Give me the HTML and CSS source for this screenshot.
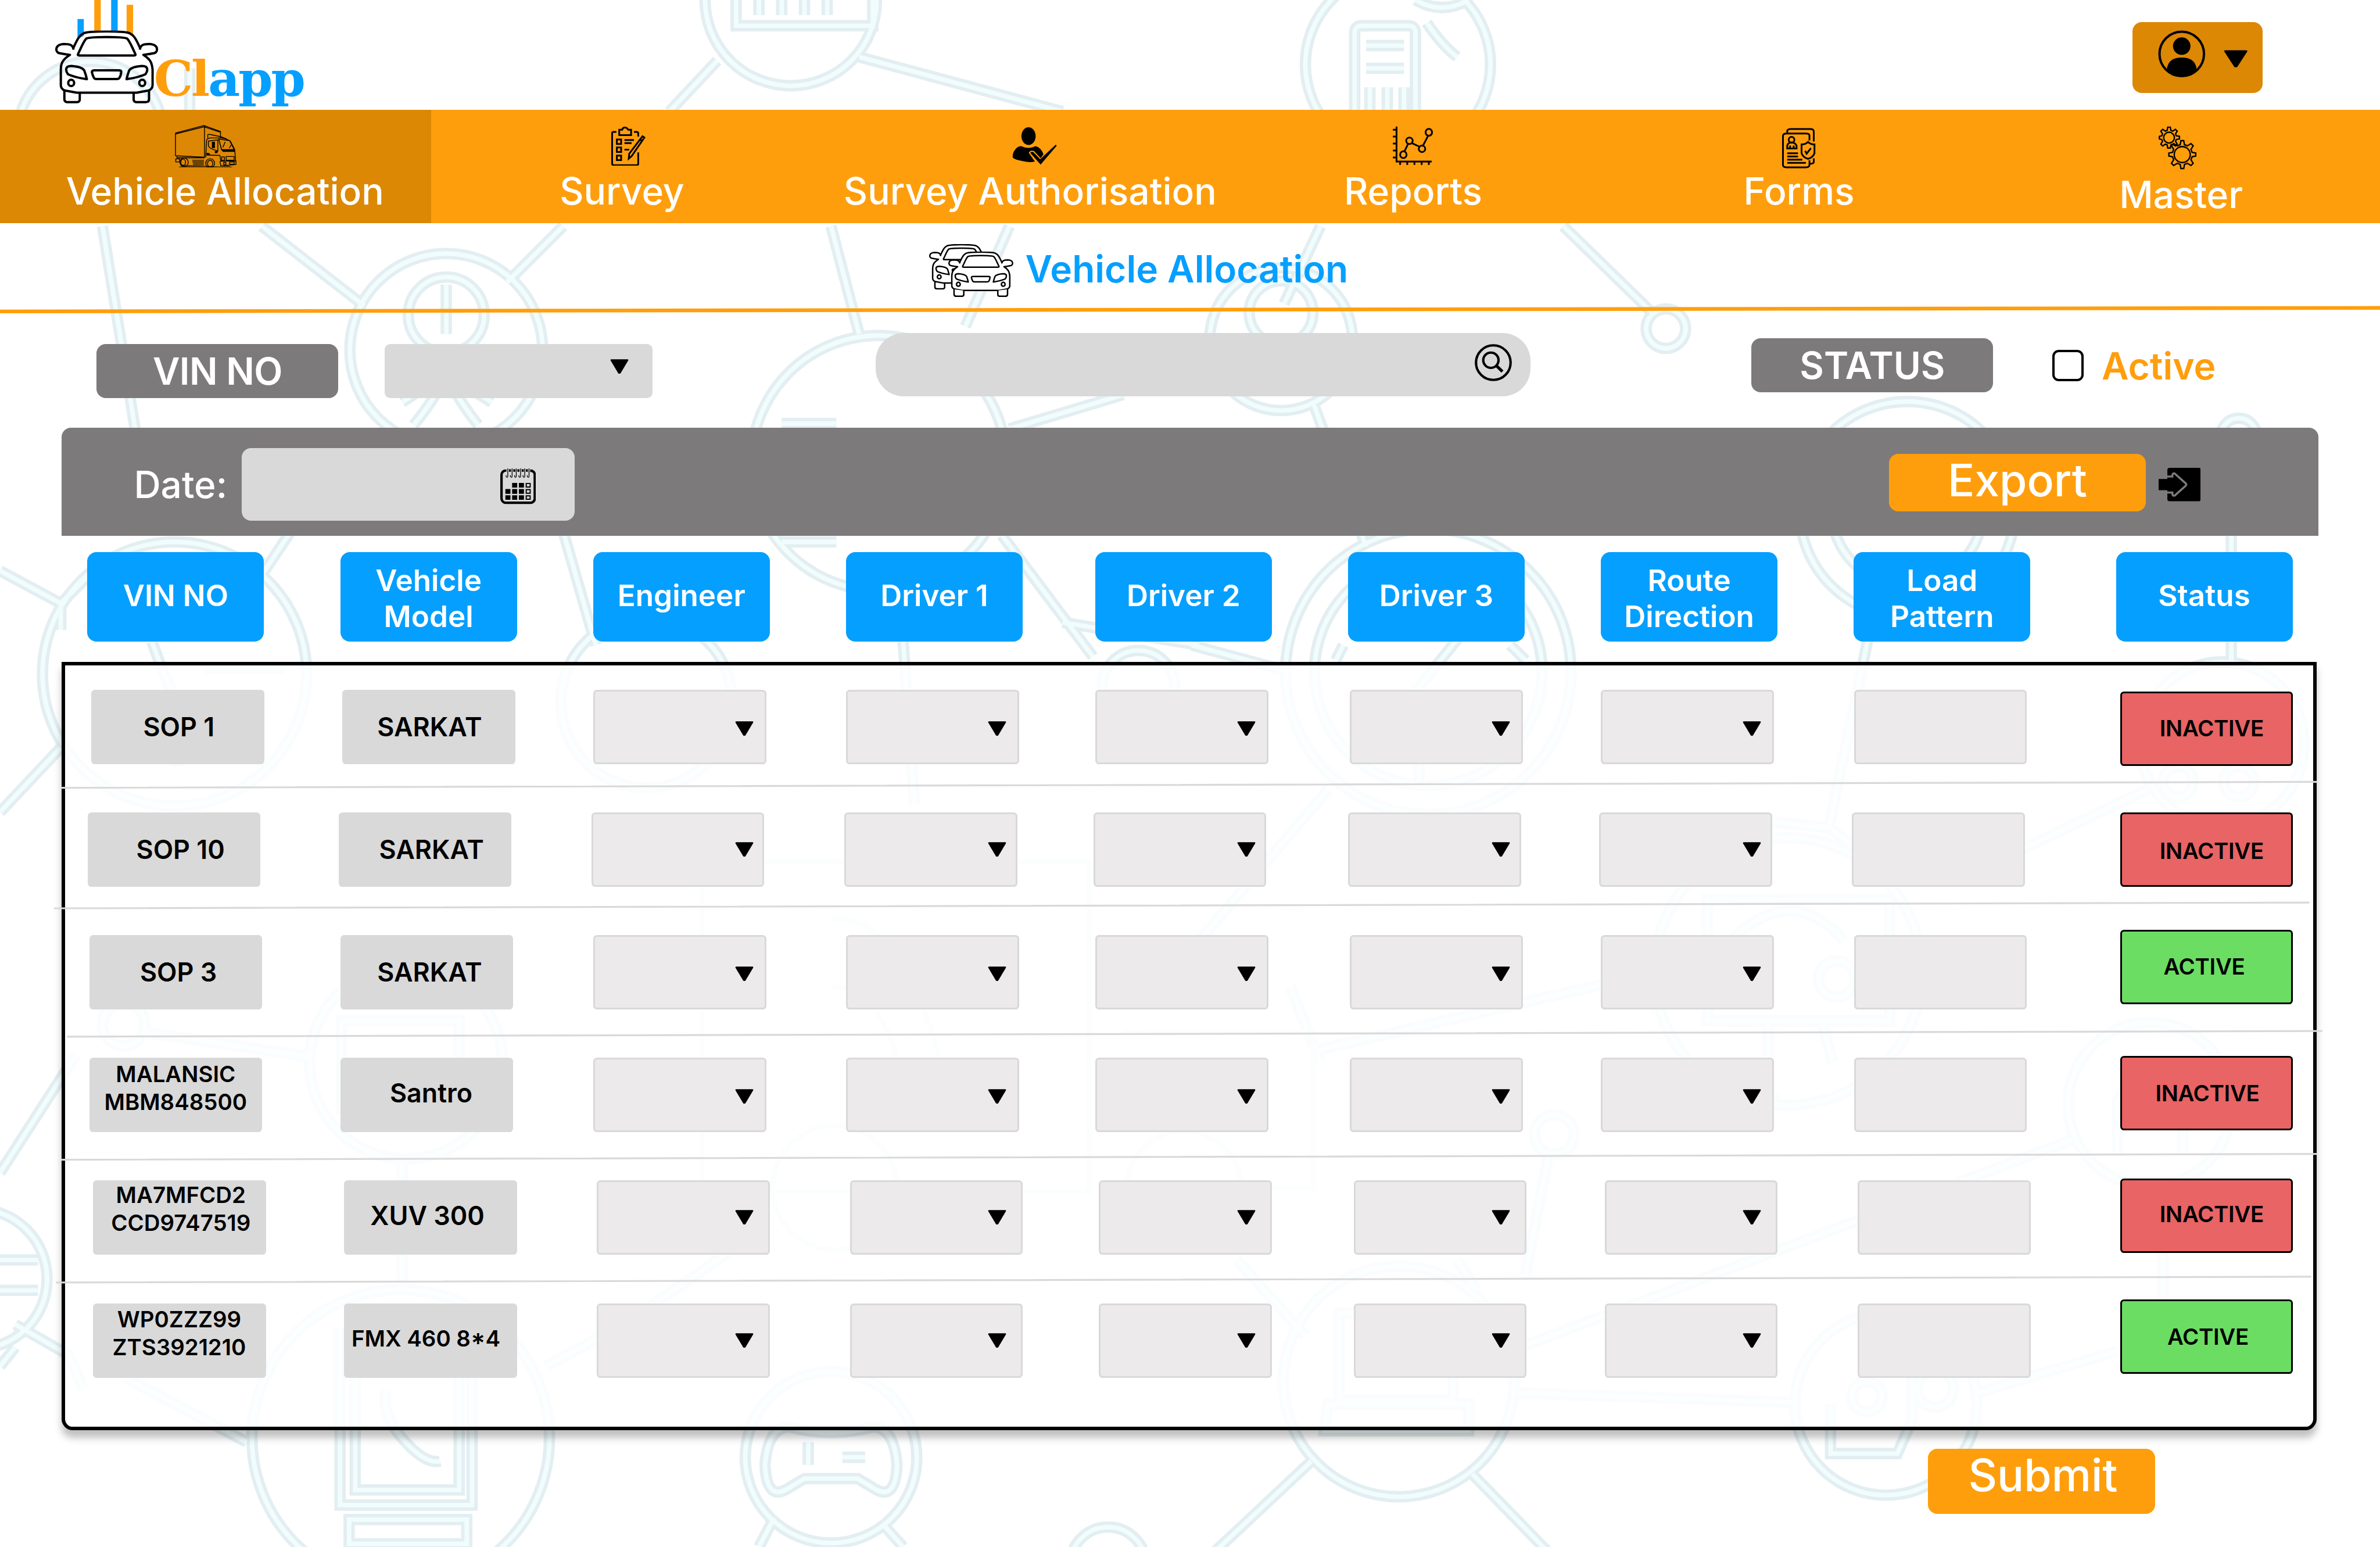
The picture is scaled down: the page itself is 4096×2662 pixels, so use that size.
FILE: index.html
```html
<!DOCTYPE html>
<html lang="en">
<head>
<meta charset="utf-8">
<title>Clapp - Vehicle Allocation</title>
<link rel="stylesheet" href="styles.css">
</head>
<body>
<svg class="defs" aria-hidden="true">
  <symbol id="caret" viewBox="0 0 10 8" preserveAspectRatio="none"><path d="M.6.5h8.8L5.3 7.4h-.6z" stroke="#000" stroke-width=".8" stroke-linejoin="round"/></symbol>
  <symbol id="car" viewBox="185 198 348 470" preserveAspectRatio="none">
    <path class="ln" d="M247 308C262 245 268 228 282 215Q300 204 359 204T436 215C450 228 456 245 471 308"/>
    <path class="ln" d="M247 322C245 288 232 285 215 285C180 287 185 345 202 345C215 350 222 352 235 355C210 385 204 410 204 450V550Q204 575 218 585L258 599H460L500 585Q514 575 514 550V450C512 410 508 385 483 355C496 352 503 350 516 345C533 345 538 287 503 285C486 285 473 288 471 322"/>
    <path class="ln" d="M262 350C275 300 280 270 290 250Q300 240 359 240T428 250C438 270 443 300 456 350Q458 359 450 359H268Q260 359 262 350Z"/>
    <path class="ln" d="M222 450Q222 427 240 427Q275 432 283 455Q288 480 292 512Q250 500 228 480Q222 465 222 450ZM496 450Q496 427 478 427Q443 432 435 455Q430 480 426 512Q468 500 490 480Q496 465 496 450ZM318 455H400Q410 455 408 467Q407 490 402 503Q400 511 392 511H325Q317 511 315 500Q311 485 309 467Q308 455 318 455Z"/>
    <ellipse class="ln" cx="239" cy="536" rx="10" ry="20"/><ellipse class="ln" cx="479" cy="536" rx="10" ry="20"/>
    <path class="ln" d="M216 588V640Q216 660 228 660H256Q268 660 268 643V601M502 588V640Q502 660 490 660H462Q450 660 450 643V601"/>
  </symbol>
  <g id="net">
    <circle cx="119" cy="177" r="96"/>
    <path d="M250 90V147"/>
    <circle cx="588" cy="461" r="127"/><circle cx="588" cy="415" r="50"/><path d="M588 375V440M520 490Q535 470 550 465M655 490Q640 470 625 465M545 560Q570 530 588 495Q606 530 630 560M530 530L560 510M648 530L616 510"/>
    <path d="M345 298L480 403M742 298L668 372M135 298L178 565M382 702L340 765M742 700L785 850"/>
    <circle cx="230" cy="888" r="174"/><path d="M0 752L80 795L120 755M80 795V830M0 1070L80 985M200 845Q220 900 235 930V1010M270 880H375"/>
    <circle cx="852" cy="925" r="113"/>
    <circle cx="1158" cy="610" r="168"/><path d="M1030 558H1102M1030 714H1102M1075 640V700"/>
    <path d="M1095 298L1132 440M1330 298L1272 430M1330 565L1480 520M1190 845L1205 1060M1320 705L1440 865"/><circle cx="1500" cy="905" r="48"/>
    <circle cx="1042" cy="0" r="113"/><path d="M970 0V34H1150V0M1000 0V20M1030 0V20M1060 0V20M1090 0V20M1132 75L1400 147M945 80L882 147"/>
    <circle cx="1842" cy="85" r="122"/><rect x="1785" y="34" width="80" height="180" rx="8"/><path d="M1800 60H1850M1800 90H1850M1805 115V145M1828 115V145M1850 115V145M1865 0Q1900 20 1935 0M1880 30Q1900 60 1920 75"/>
    <path d="M1740 298L1692 400M2060 298L2180 415"/><circle cx="2195" cy="433" r="26"/>
    <circle cx="1688" cy="447" r="94"/><circle cx="1688" cy="412" r="42"/><path d="M1730 530L1800 720"/>
    <circle cx="1882" cy="885" r="188"/><circle cx="1882" cy="885" r="150"/><path d="M1770 850L1760 870M1990 850L2010 870M1850 930L1930 830M1870 1000V1030M1700 885L1570 850M1750 1040L1580 1240M1400 820L1580 850"/>
    <circle cx="2513" cy="671" r="142"/><circle cx="2513" cy="671" r="100"/><path d="M2470 800L2410 1090L2300 1080M2410 1090L2460 1130"/>
    <circle cx="2928" cy="980" r="108"/><path d="M2940 600V872M2620 1140L2830 1040"/><circle cx="2950" cy="575" r="24"/><circle cx="2870" cy="1030" r="20"/><circle cx="2950" cy="1030" r="20"/>
    <circle cx="2356" cy="1280" r="176"/><path d="M2250 1185H2490V1345H2250ZM2330 1345V1430M2400 1345L2415 1400M2280 1240Q2360 1160 2430 1240M1730 1385L2120 1295M1700 1300L1740 1400"/><circle cx="2420" cy="1290" r="24"/>
    <circle cx="2833" cy="1455" r="108"/><circle cx="2048" cy="1495" r="26"/><path d="M2790 1520V1450Q2833 1370 2876 1450V1520M2735 1500L1990 1780M2850 1560V1740M2130 1480Q2300 1500 2340 1440M2040 1522L2010 1680"/>
    <circle cx="535" cy="1400" r="127"/><circle cx="163" cy="1350" r="28"/><path d="M192 1360L405 1392M450 1345H605V1460H450ZM530 1530V1690M100 1390L0 1545M960 1650L830 1740L720 1800"/>
    <circle cx="-30" cy="1685" r="92"/><path d="M0 1660H50M0 1700H50M20 1775L0 1800M20 1745L90 1785L110 1830M165 1815L325 1900"/>
    <circle cx="528" cy="1895" r="196"/><path d="M448 1750V1983H622V1750M468 1770V1963H605V1770M460 2002H615V2034H460ZM510 1830Q500 1860 530 1895T580 1925"/>
    <circle cx="1095" cy="1920" r="113"/><path d="M1040 1880Q1095 1895 1150 1880Q1178 1880 1182 1930Q1180 1980 1150 1960L1130 1948H1060L1040 1960Q1010 1980 1008 1930Q1012 1880 1040 1880ZM1065 1900V1930M1110 1920H1140M1165 2010L1190 2038M1020 2000L1000 2038"/><circle cx="1460" cy="2062" r="50"/>
    <circle cx="1843" cy="1820" r="152"/><path d="M1765 1730H1915V1845H1765ZM1750 1850H1935V1885H1745ZM1630 1660L1720 1760M1728 1925L1600 2045M1940 1942L2040 2045M1995 1835L2370 1848M2605 1835L2790 1780M1945 1700L1920 1660"/>
    <circle cx="2485" cy="1850" r="120"/><path d="M2412 1850V1915H2500L2520 1870V1810"/><circle cx="2460" cy="1840" r="20"/><circle cx="2550" cy="1830" r="24"/>
  </g>
</svg>

<div class="page">
  <svg class="backdrop" viewBox="0 0 3136 2038" preserveAspectRatio="none"><use href="#net" class="net-edge"/><use href="#net" class="net-core"/>
    <g class="net-van"><path d="M925 1135H1435V1570H925ZM1095 1210Q1200 1200 1260 1480M1095 1300Q1180 1300 1200 1490M1480 1360H1730V1565H1640"/><circle cx="1100" cy="1565" r="82"/><circle cx="1560" cy="1565" r="75"/></g></svg>

  <header class="header">
    <div class="logo">
      <svg class="logo-mark" viewBox="0 0 57 56"><path fill="#059fff" d="M12 10.2h3.4v9L12 21zM30.1 0h3.5v17h-3.5z"/><path fill="#ff9e0c" d="M21 0h3.5v17H21zM38.4 2.6h3.5V20l-3.5-2.6z"/><use href="#car" x="0" y="16.4" width="55.4" height="39.2"/></svg>
      <span class="logo-text"><b>Cl</b>app</span>
    </div>
    <button class="profile">
      <svg class="avatar" viewBox="0 0 26 26"><circle cx="13" cy="13" r="12.2" fill="none" stroke="#000" stroke-width="1.3"/><circle cx="13" cy="8.7" r="4.8"/><path d="M4.8 21.5Q5.5 15 13 15t8.2 6.5Q17.500 25 13 25t-8.200-3.500z"/></svg>
      <svg class="profile-caret"><use href="#caret" width="100%" height="100%"/></svg>
    </button>
  </header>

  <nav class="nav">
    <a class="tab tab-active"><span class="tab-icon"><svg class="i-truck" viewBox="588 806 211 275" preserveAspectRatio="none">
      <path class="thin" d="M592 858L688 810L744 848V888M592 858V1005L690 1014V812M592 864L688 818L742 852M694 1015L697 905Q698 893 710 890L745 890Q765 895 777 910L792 965L795 1035M701 890V870Q702 864 710 868L745 882L765 897M703 910L735 903V975L720 965Q706 955 703 940ZM738 897L775 908L790 965H748ZM738 897L748 970M760 915L752 950M780 935L774 955M697 1000L742 1003L745 1040L796 1038V1062L745 1070L742 1040M748 1012H757V1036H748ZM763 1010H790V1034H763ZM755 1048H762V1064H755ZM775 1045H790V1060H775ZM593 1025H606V1045H593ZM597 1008V1018H690"/>
      <path d="M746 964H791L792 980H752ZM715 915H725V955H715ZM697 985L708 990V1000H697ZM725 975H734V988H725Z"/>
      <path d="M648 1030H688V1068H652Z" opacity=".5"/>
      <path d="M602 1080Q612 1062 650 1066L690 1070L745 1074L770 1068L786 1080Z" opacity=".6"/>
      <g class="thin"><ellipse cx="621" cy="1047" rx="14" ry="28"/><ellipse cx="618" cy="1047" rx="8" ry="20"/><ellipse cx="709" cy="1054" rx="15" ry="30"/><ellipse cx="709" cy="1056" rx="9" ry="22"/></g></svg></span>Vehicle Allocation</a>
    <a class="tab"><span class="tab-icon"><svg class="i-survey" viewBox="210 126 74 254" preserveAspectRatio="none">
      <path class="mid" d="M222 160H216Q213 160 213 168V364Q213 374 217 374H264Q268 374 268 366V292M259 160H264Q268 160 268 168V190M228 146H234Q236 131 240 131T247 146H253V180H228ZM223 208H232V237H223ZM223 260H232V289H223ZM223 312H232V341H223ZM239 212H259M239 232H254M239 274H249M272 208L277 188L281 196L276 218ZM272 208L249 300L248 332L254 316L276 218"/></svg></span>Survey</a>
    <a class="tab"><span class="tab-icon"><svg class="i-user" viewBox="1056 131 95 242" preserveAspectRatio="none">
      <ellipse cx="1090.500" cy="188" rx="15" ry="57"/><path d="M1075 253Q1090 275 1105 253Q1116 258 1122 305L1116 330L1102 284Q1094 275 1091 296L1104 352Q1092 360 1080 350Q1060 340 1057 325Q1056 290 1066 262Q1070 253 1075 253Z"/><path d="M1094 296Q1097 285 1101 292L1115 337L1148 243L1150 250L1116 372Z"/></svg></span>Survey Authorisation</a>
    <a class="tab"><span class="tab-icon"><svg class="i-reports" viewBox="190 626 58 195" preserveAspectRatio="none">
      <path class="mid" d="M196 628V802H245M191 644H196M191 678H196M191 713H196M191 747H196M191 782H196M201 802V819M211 802V819M221 802V819M231 802V819M241 802V819M207 752L212 715M217 710L229 730M233 722L240 674"/><g class="mid"><ellipse cx="205.500" cy="768" rx="4.500" ry="17"/><ellipse cx="214" cy="699" rx="4.500" ry="16"/><ellipse cx="231.500" cy="739" rx="4.500" ry="16"/><ellipse cx="241" cy="657" rx="4.500" ry="17"/></g></svg></span>Reports</a>
    <a class="tab"><span class="tab-icon"><svg class="i-forms" viewBox="734 634 48 202" preserveAspectRatio="none">
      <path class="mid" d="M742 660V648Q743 640 747 640H774Q779 640 779 652V702M779 785V805Q778 812 774 812M773 697V672Q773 662 768 662H741Q736 662 736 674V818Q736 830 741 830H768Q773 830 773 818V795M742 736V722Q743 707 748 707T755 722V736ZM746 722V734M751 722V734M742 760H757M742 776H757M742 792H763M742 808H768M762 716Q768 716 771 704Q774 716 780 716V760Q778 780 771 788Q764 780 762 760ZM767 748L769 762L775 735"/><ellipse class="mid" cx="748" cy="693" rx="4" ry="14"/></svg></span>Forms</a>
    <a class="tab tab-low"><span class="tab-icon"><svg class="i-master" viewBox="0 0 20.400 23.200">
      <g class="mid fine"><circle cx="5.600" cy="6.200" r="2.900"/><path d="M4.900.6h1.400l.3 1.700 1 .4L9 1.700l1 1-.9 1.500.4 1 1.700.3v1.400l-1.700.3-.4 1 .9 1.500-1 1-1.400-1-1 .4-.3 1.700H4.900l-.3-1.700-1-.4-1.400 1-1-1 .9-1.500-.4-1-1.300-.3V5.500l1.300-.3.4-1-.9-1.500 1-1 1.400 1 1-.4z"/>
      <circle cx="12.700" cy="15.300" r="4.300"/><path d="M12 7.800h1.500l.4 2.200 1.600.6 1.900-1.200 1.200 1.200-1.200 1.900.6 1.600 2 .4v1.600l-2 .4-.6 1.600 1.200 1.900-1.200 1.200-1.900-1.200-1.600.6-.4 2.200H12l-.4-2.200-1.600-.6-1.900 1.200-1.200-1.200 1.200-1.900-.6-1.600-2-.4v-1.600l2-.4.6-1.600-1.200-1.900 1.200-1.200 1.900 1.200 1.600-.6z"/></g></svg></span>Master</a>
  </nav>

  <div class="title-bar">
    <svg class="cars" viewBox="0 0 46 29"><use href="#car" x="0" y="0" width="35" height="24.500"/><use href="#car" class="car-front" x="10.300" y="4" width="35" height="24.500"/></svg>
    <h1>Vehicle Allocation</h1>
  </div>
  <svg class="rule" viewBox="0 0 1280 5" preserveAspectRatio="none"><path d="M0 3.400L1280 1.500" stroke="#ff9e0c" stroke-width="2"/></svg>

  <section class="filters">
    <span class="pill pill-vin">VIN NO</span>
    <div class="vin-select"><svg class="caret"><use href="#caret" width="100%" height="100%"/></svg></div>
    <div class="search"><svg viewBox="0 0 20 20"><g fill="none" stroke="#000" stroke-width="1.300"><circle cx="10" cy="10" r="9.300"/><circle cx="8.700" cy="8.700" r="4.100" stroke-width="1.300"/><path d="M11.700 11.700l3.200 3.100" stroke-width="1.600"/></g></svg></div>
    <span class="pill pill-status">STATUS</span>
    <span class="checkbox"></span><span class="check-label">Active</span>
  </section>

  <section class="toolbar">
    <span class="date-label">Date:</span>
    <div class="date-input"><svg viewBox="0 0 19 19"><rect x=".65" y="1.100" width="17.700" height="17.200" rx="2.300" fill="none" stroke="#000" stroke-width="1.300"/><path d="M2.600 0h13.800v2.200H2.600z" fill="#d9d9d9"/><path d="M4.600.5h1.100v1.300H4.600zM6.900.5H8v1.300H6.900zM9.100.5h1.100v1.300H9.100zM11.400.5h1.100v1.300h-1.100zM13.600.5h1.100v1.300h-1.100zM1.600 1L3.300.5v1.300H1.800zM15.900.5l1.600.5v.9h-1.600z"/><path d="M4 0v4.300q-.3.900-.9 0V3.600M6.300 0v4.300q-.3.900-.9 0V3.600M8.500 0v4.300q-.3.900-.9 0V3.600M10.800 0v4.300q-.3.900-.9 0V3.600M13 0v4.300q-.3.900-.9 0V3.600M15.300 0v4.300q-.3.900-.9 0V3.600" fill="none" stroke="#000" stroke-width=".4"/><path d="M6.300 7.700h2.700v2.500H6.300zM9.900 7.700h2.700v2.500H9.900zM2.700 11h2.700v2.500H2.700zM6.300 11h2.700v2.500H6.300zM9.900 11h2.700v2.500H9.900zM2.700 14.300h2.700v2.400H2.700zM6.300 14.300h2.700v2.400H6.300zM9.900 14.300h2.700v2.400H9.900z"/><path d="M13.800 8h2.100v1.900h-2.100zM13.800 11.300h2.100v1.900h-2.100zM13.800 14.600h2.100v1.800h-2.100z" fill="none" stroke="#000" stroke-width=".6"/></svg></div>
    <button class="btn btn-export">Export</button>
    <svg class="export-icon" viewBox="0 0 22.500 18"><path d="M6 0h15.800q.7 0 .7.700v16.600q0 .7-.7.700H6q-1.300 0-1.300-1.200V12H0V6h4.700V1.200Q4.700 0 6 0z"/><path d="M4.600 4.700h2.800V3.900q.2-1.200 1.300-.8L14.600 8.400q.6.600 0 1.200L8.700 14.900q-1.100.4-1.300-.8v-.8H4.600" fill="none" stroke="#7d7a7b" stroke-width="1.100"/></svg>
  </section>

  <div class="heads">
    <div class="head">VIN NO</div><div class="head head-two">Vehicle<br>Model</div><div class="head">Engineer</div><div class="head">Driver 1</div><div class="head">Driver 2</div><div class="head">Driver 3</div><div class="head head-two">Route<br>Direction</div><div class="head head-two">Load<br>Pattern</div><div class="head">Status</div>
  </div>

  <main class="table">
    <div class="row row-1">
      <div class="ids"><div class="cell vin"><span>SOP 1</span></div><div class="cell model"><span>SARKAT</span></div></div>
      <div class="fields"><div class="field"><svg class="caret"><use href="#caret" width="100%" height="100%"/></svg></div><div class="field"><svg class="caret"><use href="#caret" width="100%" height="100%"/></svg></div><div class="field"><svg class="caret"><use href="#caret" width="100%" height="100%"/></svg></div><div class="field"><svg class="caret"><use href="#caret" width="100%" height="100%"/></svg></div><div class="field"><svg class="caret"><use href="#caret" width="100%" height="100%"/></svg></div><div class="field"></div></div>
      <div class="status inactive"><span>INACTIVE</span></div>
    </div>
    <div class="row row-2">
      <div class="ids"><div class="cell vin"><span>SOP 10</span></div><div class="cell model"><span>SARKAT</span></div></div>
      <div class="fields"><div class="field"><svg class="caret"><use href="#caret" width="100%" height="100%"/></svg></div><div class="field"><svg class="caret"><use href="#caret" width="100%" height="100%"/></svg></div><div class="field"><svg class="caret"><use href="#caret" width="100%" height="100%"/></svg></div><div class="field"><svg class="caret"><use href="#caret" width="100%" height="100%"/></svg></div><div class="field"><svg class="caret"><use href="#caret" width="100%" height="100%"/></svg></div><div class="field"></div></div>
      <div class="status inactive"><span>INACTIVE</span></div>
    </div>
    <div class="row row-3">
      <div class="ids"><div class="cell vin"><span>SOP 3</span></div><div class="cell model"><span>SARKAT</span></div></div>
      <div class="fields"><div class="field"><svg class="caret"><use href="#caret" width="100%" height="100%"/></svg></div><div class="field"><svg class="caret"><use href="#caret" width="100%" height="100%"/></svg></div><div class="field"><svg class="caret"><use href="#caret" width="100%" height="100%"/></svg></div><div class="field"><svg class="caret"><use href="#caret" width="100%" height="100%"/></svg></div><div class="field"><svg class="caret"><use href="#caret" width="100%" height="100%"/></svg></div><div class="field"></div></div>
      <div class="status active"><span>ACTIVE</span></div>
    </div>
    <div class="row row-4">
      <div class="ids"><div class="cell vin small"><span>MALANSIC<br>MBM848500</span></div><div class="cell model"><span>Santro</span></div></div>
      <div class="fields"><div class="field"><svg class="caret"><use href="#caret" width="100%" height="100%"/></svg></div><div class="field"><svg class="caret"><use href="#caret" width="100%" height="100%"/></svg></div><div class="field"><svg class="caret"><use href="#caret" width="100%" height="100%"/></svg></div><div class="field"><svg class="caret"><use href="#caret" width="100%" height="100%"/></svg></div><div class="field"><svg class="caret"><use href="#caret" width="100%" height="100%"/></svg></div><div class="field"></div></div>
      <div class="status inactive"><span>INACTIVE</span></div>
    </div>
    <div class="row row-5">
      <div class="ids"><div class="cell vin small"><span>MA7MFCD2<br>CCD9747519</span></div><div class="cell model"><span>XUV 300</span></div></div>
      <div class="fields"><div class="field"><svg class="caret"><use href="#caret" width="100%" height="100%"/></svg></div><div class="field"><svg class="caret"><use href="#caret" width="100%" height="100%"/></svg></div><div class="field"><svg class="caret"><use href="#caret" width="100%" height="100%"/></svg></div><div class="field"><svg class="caret"><use href="#caret" width="100%" height="100%"/></svg></div><div class="field"><svg class="caret"><use href="#caret" width="100%" height="100%"/></svg></div><div class="field"></div></div>
      <div class="status inactive"><span>INACTIVE</span></div>
    </div>
    <div class="row row-6">
      <div class="ids"><div class="cell vin small"><span>WP0ZZZ99<br>ZTS3921210</span></div><div class="cell model small"><span>FMX 460 8*4</span></div></div>
      <div class="fields"><div class="field"><svg class="caret"><use href="#caret" width="100%" height="100%"/></svg></div><div class="field"><svg class="caret"><use href="#caret" width="100%" height="100%"/></svg></div><div class="field"><svg class="caret"><use href="#caret" width="100%" height="100%"/></svg></div><div class="field"><svg class="caret"><use href="#caret" width="100%" height="100%"/></svg></div><div class="field"><svg class="caret"><use href="#caret" width="100%" height="100%"/></svg></div><div class="field"></div></div>
      <div class="status active"><span>ACTIVE</span></div>
    </div>
    <svg class="dividers" viewBox="0 0 1280 413" preserveAspectRatio="none"><path d="M33 67.700L1246 64.500M29 132.500L1242 129.400M36 201.500L1249 198.500M33 267.700L1246 264.600M30 333.700L1243 330.600" fill="none" stroke="#d9d9d9"/></svg>
  </main>

  <button class="btn btn-submit">Submit</button>
</div>
</body>
</html>
```
FILE: styles.css
```css
/* 1rem is one unit of the 1280 x 832 layout */
html { font-size: 3.2px; }
*, *::before, *::after { box-sizing: border-box; }
body { margin: 0; font-family: Inter, "Liberation Sans", sans-serif; font-size: 14rem; font-weight: 500; color: #000; background: #fff; }
button { font: inherit; border: 0; padding: 0; }
svg { display: block; flex: none; }
.defs { position: absolute; width: 0; height: 0; }

.page { position: relative; z-index: 0; width: 1280rem; height: 831.8rem; overflow: hidden; }
.backdrop { position: absolute; inset: 0; width: 100%; height: 100%; z-index: -1; fill: none; }
.net-edge { stroke: #e3eef2; stroke-width: 15; }
.net-core { stroke: #f1fcfd; stroke-width: 6; }
.net-van { stroke: #eef8fa; stroke-width: 7; }

.ln { fill: inherit; stroke: #000; stroke-width: var(--line, 4px); stroke-linejoin: round; vector-effect: non-scaling-stroke; }
.mid, .mid * { fill: none; stroke: #000; stroke-width: 3px; vector-effect: non-scaling-stroke; }
.fine * { stroke-width: 2.4px; }
.thin, .thin * { fill: none; stroke: #000; stroke-width: 1.4px; vector-effect: non-scaling-stroke; }

/* header */
.header { display: flex; justify-content: space-between; align-items: flex-start; height: 59rem; padding-right: 63rem; }
.logo { display: flex; padding-left: 29.8rem; fill: none; }
.logo-mark { width: 57rem; height: 56rem; }
.logo-text { margin: 26.800rem 0 0 -4.100rem; font: bold 26.500rem/31rem "DejaVu Serif", serif; letter-spacing: -.950rem; color: #059fff; }
.logo-text b { color: #ff9e0c; }
.profile { display: flex; width: 70rem; height: 38rem; margin-top: 12rem; padding-left: 13.700rem; border-radius: 5rem; background: #dc8805; }
.avatar { width: 25.500rem; height: 25.500rem; margin-top: 4.300rem; }
.profile-caret { width: 13rem; height: 9.500rem; margin: 15rem 0 0 9.800rem; }

/* navigation */
.nav { display: grid; grid-template-columns: 232rem 205rem 234rem 178rem 237rem 174rem; height: 61rem; background: #ff9e0c; }
.tab { display: flex; flex-direction: column; align-items: center; color: #fff; font-size: 20rem; line-height: 24rem; white-space: nowrap; }
.tab-active { padding-left: 10rem; background: #dc8805; }
.tab-icon { height: 31.900rem; }
.tab-low .tab-icon { height: 33.900rem; }
.i-truck { width: 33.600rem; height: 22.900rem; margin: 8.200rem 21rem 0 0; }
.i-survey { width: 18.900rem; height: 21.200rem; margin: 9rem 0 0 7rem; }
.i-user { width: 24.200rem; height: 20.200rem; margin: 9.400rem 0 0 5rem; }
.i-reports { width: 22.400rem; height: 21.100rem; margin-top: 8.900rem; }
.i-forms { width: 18.500rem; height: 21.900rem; margin-top: 9.700rem; }
.i-master { width: 20.400rem; height: 23.200rem; margin: 8.900rem 4rem 0 0; }

/* title */
.title-bar { display: flex; height: 44rem; padding-left: 499.800rem; }
.cars { --line: 2.5px; width: 46rem; height: 29rem; margin-top: 11.400rem; fill: none; }
.car-front { fill: #fff; }
h1 { margin: 12.800rem 0 0 5.600rem; font-size: 20rem; line-height: 24rem; font-weight: 600; color: #059fff; white-space: nowrap; }
.rule { width: 1280rem; height: 5rem; }

/* filters */
.filters { display: flex; align-items: flex-start; height: 61rem; padding-left: 52rem; }
.pill { width: 130rem; height: 29rem; border-radius: 5rem; background: #7d7a7b; color: #fff; font-size: 20rem; line-height: 24rem; font-weight: 600; text-align: center; }
.pill-vin { margin-top: 16rem; padding-top: 2.700rem; letter-spacing: -.200rem; }
.pill-status { margin: 13rem 0 0 119rem; padding-top: 2.700rem; }
.vin-select { width: 144rem; height: 29rem; margin: 16rem 0 0 25rem; padding: 8rem 0 0 121rem; border-radius: 3rem; background: #d9d9d9; }
.caret { width: 10rem; height: 8rem; }
.search { width: 352rem; height: 34rem; margin: 10rem 0 0 120rem; padding: 6rem 0 0 322rem; border-radius: 15rem; background: #d9d9d9; }
.search svg { width: 20rem; height: 20rem; }
.checkbox { width: 17rem; height: 17rem; margin: 19rem 0 0 31.700rem; border: 1.500rem solid #000; border-radius: 3.500rem; background: #fff; }
.check-label { margin: 16rem 0 0 9.600rem; font-size: 20rem; line-height: 24rem; font-weight: 600; color: #ff9e0c; }

/* toolbar */
.toolbar { display: flex; align-items: flex-start; width: 1214rem; height: 58rem; margin-left: 33rem; padding-left: 39rem; border-radius: 5rem 5rem 0 0; background: #7d7a7b; }
.date-label { width: 58rem; margin-top: 18.700rem; font-size: 20rem; line-height: 24rem; color: #fff; }
.date-input { width: 179rem; height: 39rem; margin-top: 11rem; padding: 11rem 0 0 139rem; border-radius: 5rem; background: #d9d9d9; }
.date-input svg { width: 19.200rem; height: 19.200rem; }
.btn { border-radius: 5rem; background: #ff9e0c; color: #fff; font-size: 24rem; line-height: 29rem; text-align: center; }
.btn-export { display: block; width: 138rem; height: 31rem; margin: 14rem 0 0 707rem; padding-bottom: 2.500rem; }
.export-icon { width: 22.500rem; height: 18rem; margin: 21.600rem 0 0 6.800rem; }

/* column heads */
.heads { display: grid; grid-template-columns: 136rem 136rem 136rem 134rem 136rem 136rem 136rem 141rem 95rem; margin: 9rem 0 0 47rem; }
.head { display: flex; align-items: center; justify-content: center; width: 95rem; height: 48rem; padding-bottom: 1.400rem; border-radius: 5rem; background: #059fff; color: #fff; font-size: 16rem; line-height: 19.360rem; font-weight: 600; text-align: center; }
.head-two { padding: 1.500rem 0 0; }

/* table */
.table { position: relative; width: 1213rem; height: 413rem; margin: 11rem 0 0 33rem; padding-top: 13rem; border: 2rem solid #000; border-radius: 0 0 6rem 6rem; background: rgba(255, 255, 255, .8); box-shadow: 0 4rem 4rem rgba(0, 0, 0, .25); }
.row { display: grid; grid-template-columns: 282.200rem 823.100rem 93rem; align-items: start; height: 66rem; }
.ids { display: flex; gap: 42rem; padding-left: calc(var(--ids) + .2rem); }
.cell { width: 93rem; height: 40rem; padding-top: var(--id-top, 11.600rem); border-radius: 2rem; background: #d9d9d9; font-size: 14rem; line-height: 17rem; font-weight: 600; text-align: center; white-space: nowrap; }
.cell span, .status span { display: block; }
.vin span { transform: translateX(var(--vin)); }
.model { padding-top: var(--model-top, 11.600rem); }
.model span { transform: translateX(var(--model)); }
.small { font-size: 12rem; line-height: 15rem; }
.fields { display: grid; grid-template-columns: 136rem 134rem 137rem 135rem 136rem 93rem; padding-left: var(--fields); }
.field { width: 93rem; height: 40rem; padding: var(--caret-top) 0 0 var(--caret); border: 1rem solid #d9d9d9; border-radius: 2rem; background: #eceaeb; }
.status { height: 40rem; margin-top: var(--status, 0); padding-top: var(--st-top, 11.400rem); border: 1rem solid #000; border-radius: 2rem; font-size: 12rem; line-height: 15rem; font-weight: 600; letter-spacing: -.100rem; text-align: center; }
.status span { transform: translateX(var(--st)); }
.inactive { background: #e96464; }
.active { background: #6cdd63; }

.row-1 { --ids: 14rem; --fields: 2rem; --caret: 75.200rem; --caret-top: 16rem; --vin: .6rem; --model: .5rem; --st: 2.800rem; --status: 1rem; }
.row-2 { --ids: 12rem; --fields: 1rem; --caret: 76.200rem; --caret-top: 15rem; --vin: 3.500rem; --model: 3.500rem; --st: 2.800rem; --st-top: 12.300rem; }
.row-3 { --ids: 13rem; --fields: 2rem; --caret: 75.200rem; --caret-top: 16rem; --vin: 1.400rem; --model: 1.500rem; --st: -1.200rem; --status: -3rem; }
.row-4 { --ids: 13rem; --fields: 2rem; --caret: 75.200rem; --caret-top: 16rem; --vin: -.1rem; --model: 2.300rem; --st: .5rem; --status: -1rem; --id-top: 1.100rem; --model-top: 10.600rem; }
.row-5 { --ids: 15rem; --fields: 4rem; --caret: 73.200rem; --caret-top: 15rem; --vin: .7rem; --model: -1.700rem; --st: 2.800rem; --status: -1rem; --st-top: 10.400rem; --id-top: .1rem; --model-top: 10.600rem; }
.row-6 { --ids: 15rem; --fields: 4rem; --caret: 73.200rem; --caret-top: 15rem; --vin: -.2rem; --model: -2.500rem; --st: .8rem; --status: -2rem; --id-top: 1.100rem; --model-top: 11.400rem; }

.dividers { position: absolute; left: -35rem; top: -2rem; width: 1280rem; height: 413rem; }

.btn-submit { display: block; width: 122rem; height: 35rem; margin: 10rem 0 0 1037rem; padding: 0 0 6.500rem 1.500rem; }
```
